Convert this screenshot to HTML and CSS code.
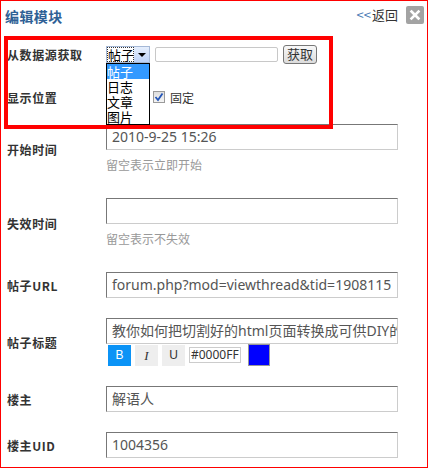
FILE: index.html
```html
<!DOCTYPE html>
<html lang="zh-CN">
<head>
    <meta charset="UTF-8">
    <title>编辑模块</title>
    <link rel="stylesheet" href="styles.css">
</head>
<body>
    <div class="dialog">
        <div class="dlg-head">
            <h3 class="dlg-title">编辑模块</h3>
            <div class="dlg-tools">
                <a class="back-link" href="#"><span class="lt">&lt;&lt;</span>返回</a>
                <a class="close-btn" href="#" title="关闭">
                    <svg width="18" height="18" viewBox="0 0 18 18">
                        <path d="M5.5 5.5 L12.5 12.5 M12.5 5.5 L5.5 12.5" stroke="#fff" stroke-width="2.6" stroke-linecap="square"/>
                    </svg>
                </a>
            </div>
        </div>

        <div class="form">
            <div class="row row-source">
                <div class="label">从数据源获取</div>
                <div class="field">
                    <div class="select">
                        <span class="sel-text">帖子</span>
                        <span class="sel-arrow"></span>
                    </div>
                    <span class="small-input"></span>
                    <button class="get-btn">获取</button>
                </div>
            </div>
            <div class="row row-pos">
                <div class="label">显示位置</div>
                <div class="field">
                    <span class="checkbox">
                        <svg width="12" height="12" viewBox="0 0 12 12">
                            <path d="M2.5 6 L5 9 L9.5 2.5" fill="none" stroke="#2456b8" stroke-width="1.8"/>
                        </svg>
                    </span>
                    <span class="check-text">固定</span>
                </div>
            </div>
            <div class="row row-hint">
                <div class="label">开始时间</div>
                <div class="field col">
                    <div class="input">2010-9-25 15:26</div>
                    <div class="hint">留空表示立即开始</div>
                </div>
            </div>
            <div class="row row-hint">
                <div class="label">失效时间</div>
                <div class="field col">
                    <div class="input"></div>
                    <div class="hint">留空表示不失效</div>
                </div>
            </div>
            <div class="row">
                <div class="label">帖子URL</div>
                <div class="field">
                    <div class="input">forum.php?mod=viewthread&amp;tid=1908115</div>
                </div>
            </div>
            <div class="row">
                <div class="label">帖子标题</div>
                <div class="field col">
                    <div class="input">教你如何把切割好的html页面转换成可供DIY的模块</div>
                    <div class="toolbar">
                        <span class="tb-btn active">B</span>
                        <span class="tb-btn italic">I</span>
                        <span class="tb-btn">U</span>
                        <span class="color-input">#0000FF</span>
                        <span class="swatch"></span>
                    </div>
                </div>
            </div>
            <div class="row">
                <div class="label">楼主</div>
                <div class="field">
                    <div class="input">解语人</div>
                </div>
            </div>
            <div class="row last">
                <div class="label">楼主UID</div>
                <div class="field">
                    <div class="input">1004356</div>
                </div>
            </div>
        </div>

        <!-- 下拉列表（展开状态） -->
        <ul class="dropdown">
            <li class="selected">帖子</li>
            <li>日志</li>
            <li>文章</li>
            <li>图片</li>
        </ul>

        <!-- 标注框 -->
        <div class="mark-box"></div>
    </div>
</body>
</html>
```

FILE: styles.css
```css
body {
    margin: 0;
    padding: 0;
    background-color: #fff;
    font-family: "Noto Sans CJK SC", sans-serif;
    font-size: 12px;
    color: #333;
}
.dialog {
    position: relative;
    width: 428px;
    box-sizing: border-box;
    border: 1px solid #f00;
    background-color: #fff;
}
.dlg-head {
    height: 33px;
    box-sizing: border-box;
    padding: 5px 3px 0 4px;
    display: flex;
    justify-content: space-between;
    align-items: flex-start;
}
.dlg-title {
    margin: 0;
    font-size: 14px;
    line-height: 20px;
    font-weight: bold;
    letter-spacing: 0.4px;
    color: #2e6095;
}
.dlg-tools {
    display: flex;
    align-items: center;
    gap: 8px;
}
.back-link {
    color: #333;
    text-decoration: none;
    font-size: 13px;
    line-height: 18px;
}
.back-link .lt {
    color: #4a7ab5;
    margin-right: 1px;
}
.close-btn {
    display: block;
    width: 18px;
    height: 18px;
    background-color: #a3a3a3;
    border-radius: 2px;
}
.close-btn svg {
    display: block;
}
.form {
    padding-left: 6px;
}
.row {
    display: flex;
    align-items: center;
    padding: 10px 0;
}
.row.last {
    padding-bottom: 9px;
}
.row-pos {
    padding: 13px 0 7px;
}
.row-hint {
    padding-bottom: 14px;
}
.label {
    width: 99px;
    flex-shrink: 0;
    font-weight: bold;
    font-size: 12px;
    letter-spacing: 0.6px;
    color: #333;
}
.field {
    width: 292px;
    display: flex;
    align-items: center;
}
.row-source .field,
.row-pos .field {
    height: 20px;
}
.field.col {
    flex-direction: column;
    align-items: flex-start;
}
.input {
    width: 292px;
    height: 26px;
    box-sizing: border-box;
    border: 1px solid #ccc;
    border-top-color: #777;
    border-left-color: #777;
    padding: 0 5px;
    font-family: "Noto Sans", "Noto Sans CJK SC", sans-serif;
    font-size: 14px;
    line-height: 24px;
    color: #555;
    white-space: nowrap;
    overflow: hidden;
}
.hint {
    margin-top: 6px;
    line-height: 18px;
    font-size: 12px;
    color: #999;
}
/* 数据源 */
.select {
    width: 44px;
    height: 17px;
    box-sizing: border-box;
    display: flex;
    background-color: #fff;
    border: 1px solid #a5b8d6;
}
.sel-text {
    flex: 1;
    font-size: 13px;
    line-height: 13px;
    color: #000;
    outline: 1px dotted #333;
    outline-offset: -1px;
    padding: 1px 0 0 1px;
}
.sel-arrow {
    width: 15px;
    position: relative;
    background: linear-gradient(#e6effd, #bcd2f8);
}
.sel-arrow::after {
    content: "";
    position: absolute;
    left: 4px;
    top: 6px;
    border-left: 4px solid transparent;
    border-right: 4px solid transparent;
    border-top: 4px solid #000;
}
.small-input {
    display: inline-block;
    width: 123px;
    height: 15px;
    box-sizing: border-box;
    margin-left: 5px;
    border: 1px solid #c8c8c8;
    border-radius: 2px;
    background-color: #fff;
}
.get-btn {
    margin-left: 5px;
    width: 34px;
    height: 19px;
    padding: 0;
    border: 1px solid #777;
    border-radius: 3px;
    background: linear-gradient(#f8f8f8, #dcdcdc);
    font-family: "Noto Sans CJK SC", sans-serif;
    font-size: 13px;
    line-height: 16px;
    color: #333;
}
.checkbox {
    margin-left: 47px;
    width: 12px;
    height: 12px;
    box-sizing: border-box;
    border: 1px solid #9a9a9a;
    background: linear-gradient(#dedede, #f4f4f4);
    display: flex;
}
.checkbox svg {
    margin: -1px;
}
.check-text {
    margin-left: 5px;
    font-size: 12px;
    color: #333;
}
/* 标题样式工具条 */
.toolbar {
    height: 22px;
    display: flex;
    align-items: center;
    padding-left: 2px;
}
.tb-btn {
    width: 23px;
    height: 21px;
    margin-right: 4px;
    background-color: #eee;
    text-align: center;
    font-family: "Liberation Sans", sans-serif;
    font-size: 12px;
    line-height: 21px;
    color: #333;
}
.tb-btn.active {
    background-color: #0b93f6;
    color: #fff;
}
.tb-btn.italic {
    font-family: "Liberation Serif", serif;
    font-style: italic;
    font-size: 13px;
}
.color-input {
    width: 52px;
    height: 16px;
    box-sizing: border-box;
    border: 1px solid #ccc;
    font-family: "Noto Sans", sans-serif;
    font-size: 12px;
    line-height: 14px;
    padding-left: 1px;
    color: #333;
}
.swatch {
    margin-left: 7px;
    width: 22px;
    height: 22px;
    box-sizing: border-box;
    border: 1px solid #999;
    background-color: #00f;
}
/* 展开的下拉列表 */
.dropdown {
    position: absolute;
    left: 105px;
    top: 62px;
    width: 44px;
    box-sizing: border-box;
    margin: 0;
    padding: 0;
    list-style: none;
    border: 1px solid #000;
    background-color: #fff;
}
.dropdown li {
    height: 15px;
    font-size: 13px;
    line-height: 15px;
    color: #000;
}
.dropdown li.selected {
    background-color: #3399ff;
    color: #fff;
}
.mark-box {
    position: absolute;
    left: 3px;
    top: 35px;
    width: 329px;
    height: 93px;
    box-sizing: border-box;
    border: 4px solid #f00;
}
```
